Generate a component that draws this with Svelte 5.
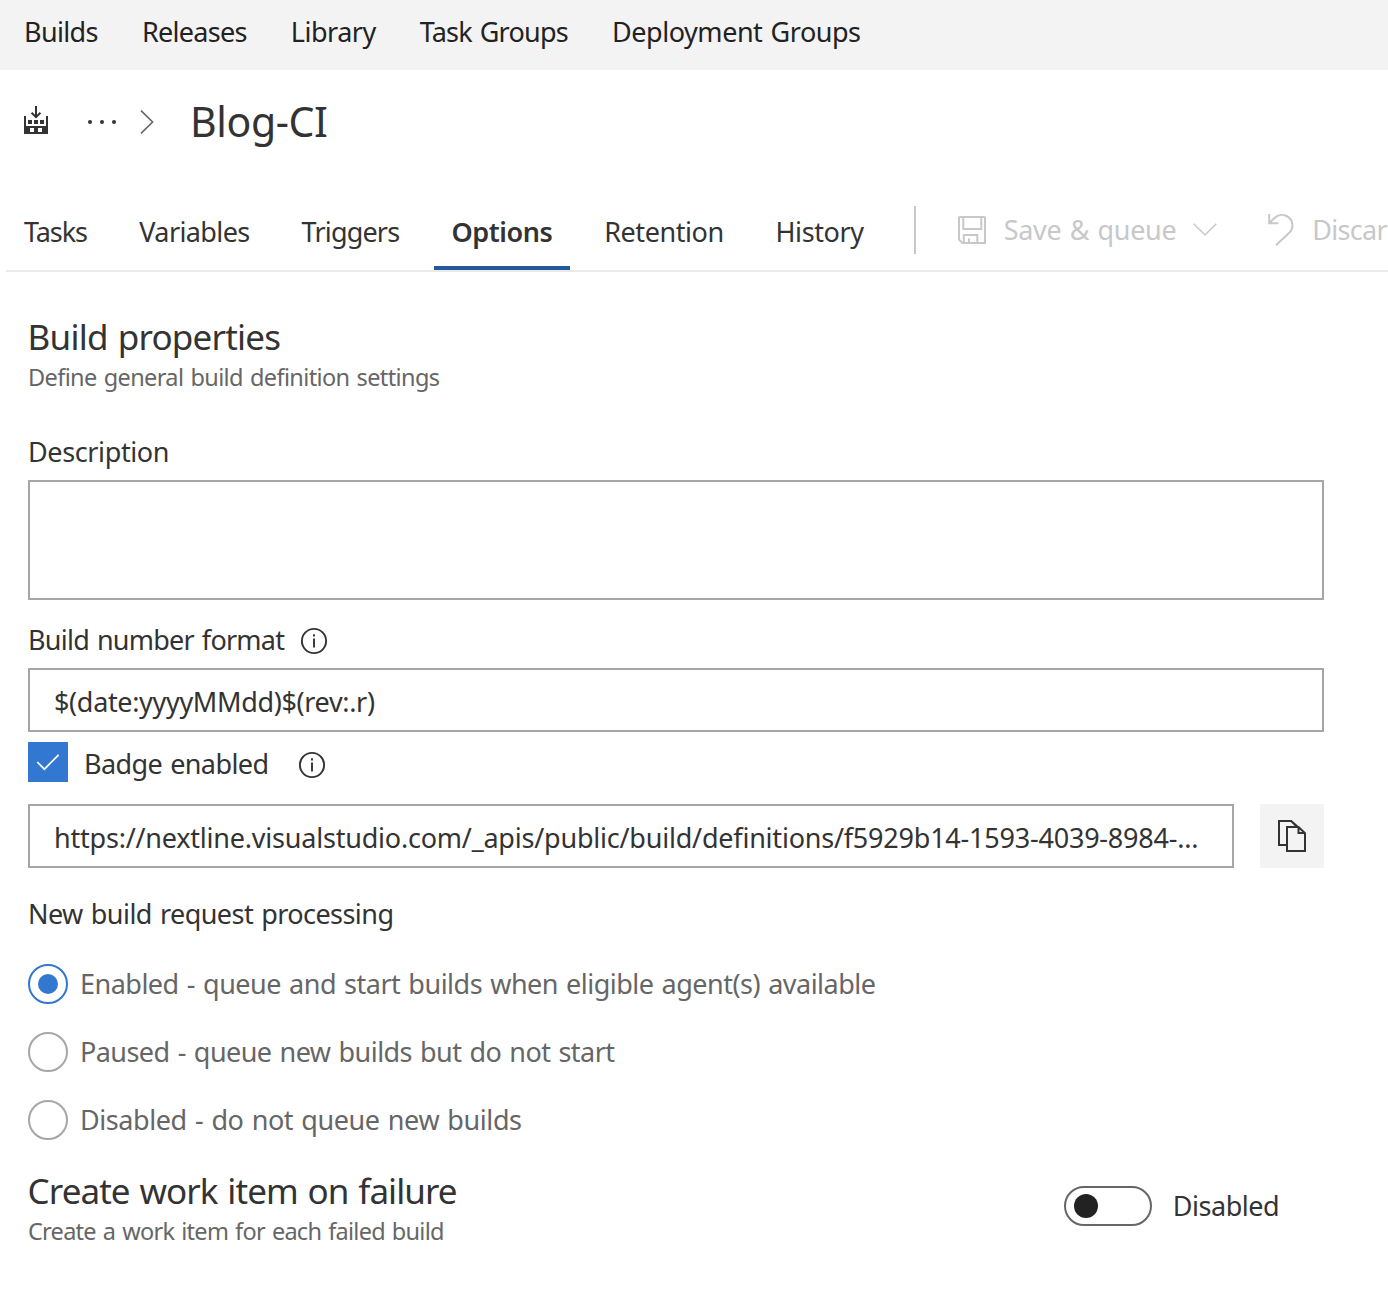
<script>
  const sections = [
    { label: 'Builds', width: 74.5 },
    { label: 'Releases', width: 105.5 },
    { label: 'Library', width: 85.5 },
    { label: 'Task Groups', width: 149 },
    { label: 'Deployment Groups', width: 249 }
  ];

  const tabs = [
    { label: 'Tasks', width: 64 },
    { label: 'Variables', width: 111 },
    { label: 'Triggers', width: 98.5 },
    { label: 'Options', width: 101.5 },
    { label: 'Retention', width: 120 },
    { label: 'History', width: 88.5 }
  ];

  const modes = [
    { id: 'enabled', label: 'Enabled - queue and start builds when eligible agent(s) available', width: 796 },
    { id: 'paused', label: 'Paused - queue new builds but do not start', width: 535 },
    { id: 'disabled', label: 'Disabled - do not queue new builds', width: 442 }
  ];

  let activeTab = $state('Options');
  let mode = $state('enabled');
  let badge = $state(true);
  let workItem = $state(false);

  // Tracks a label so that it takes exactly the given width.
  function fit(node, width) {
    const natural = node.getBoundingClientRect().width;
    const count = node.textContent.length;
    node.style.letterSpacing = `${(width - natural) / (count - 1)}px`;
    node.style.width = `${width}px`;
  }
</script>

{#snippet info()}
  <svg class="info" viewBox="0 0 26 26" aria-hidden="true">
    <circle cx="13" cy="13" r="12.1" />
    <path d="M13 10.5V19.5M13 6.3V8.6" />
  </svg>
{/snippet}

<div class="page">
  <nav class="sections">
    {#each sections as s}
      <span class="text" use:fit={s.width}>{s.label}</span>
    {/each}
  </nav>

  <header class="crumb">
    <svg class="factory" viewBox="0 0 24 28" aria-hidden="true">
      <path class="solid" fill-rule="evenodd" d="M0 10H2V20H22V10H24V28H0ZM6 22V26H10V22ZM14 22V26H18V22Z" />
      <path class="solid" d="M4 14H8V18H4ZM10 14H14V18H10ZM16 14H20V18H16Z" />
      <path class="arrow" d="M12 0V11M7.6 6.8L12 11.2L16.4 6.8" />
    </svg>
    <svg class="dots" viewBox="0 0 28 4" aria-hidden="true">
      <circle cx="2" cy="2" r="2" /><circle cx="14" cy="2" r="2" /><circle cx="26" cy="2" r="2" />
    </svg>
    <svg class="next" viewBox="0 0 14 24" aria-hidden="true"><path d="M1 0.6L12.6 12L1 23.4" /></svg>
    <h1 class="text" use:fit={138}>Blog-CI</h1>
  </header>

  <div class="toolbar">
    <div class="tabs">
      {#each tabs as t}
        <button class="tab" class:active={t.label === activeTab} onclick={() => (activeTab = t.label)}>
          <span class="text" use:fit={t.width}>{t.label}</span>
        </button>
      {/each}
    </div>
    <div class="divider"></div>
    <div class="actions">
      <svg class="save" viewBox="0 0 28 28" aria-hidden="true">
        <path d="M2 1H26Q27 1 27 2V27H4.5L1 23.5V2Q1 1 2 1ZM5.3 1V13H23.3V1M5.8 27V19H19.3V27M11 27V22.5" />
      </svg>
      <span class="text" use:fit={173}>Save &amp; queue</span>
      <svg class="down" viewBox="0 0 24 13" aria-hidden="true"><path d="M0.7 0.8L12 12L23.3 0.8" /></svg>
      <svg class="undo" viewBox="0 0 26 32" aria-hidden="true">
        <path d="M1.2 0V9.2H10.5M1.2 9.2L6.5 4C9.5 1 14.5 0.2 18.5 2C25 5 26.4 13.5 21.5 18.5L8 31.3" />
      </svg>
      <span class="text" use:fit={75.5}>Discar</span>
    </div>
  </div>

  <main>
    <h2 class="text" use:fit={253.5}>Build properties</h2>
    <p class="sub text" use:fit={412}>Define general build definition settings</p>

    <div class="label first"><span class="text" use:fit={141.5}>Description</span></div>
    <div class="box area"></div>

    <div class="label second"><span class="text" use:fit={257}>Build number format</span>{@render info()}</div>
    <div class="box field"><span class="text" use:fit={321}>$(date:yyyyMMdd)$(rev:.r)</span></div>

    <div class="badge">
      <button class="check" class:on={badge} aria-label="Badge enabled" onclick={() => (badge = !badge)}>
        <svg viewBox="0 0 24 18" aria-hidden="true"><path d="M1.2 9L8.4 16.2L22.6 1.8" /></svg>
      </button>
      <span class="badge-text"><span class="text" use:fit={185}>Badge enabled</span>{@render info()}</span>
    </div>

    <div class="url">
      <div class="box field">
        <span class="text" use:fit={1144.5}>https://nextline.visualstudio.com/_apis/public/build/definitions/f5929b14-1593-4039-8984-...</span>
      </div>
      <button class="copy" aria-label="Copy">
        <svg viewBox="0 0 28 32" aria-hidden="true">
          <path d="M8 25H1V1H13.2L19 6.8M9 7H20.5L27 13.2V31H9ZM20.5 7V13H27M13.2 1L20.5 7.5" />
        </svg>
      </button>
    </div>

    <div class="label third"><span class="text" use:fit={366}>New build request processing</span></div>
    <div class="modes">
      {#each modes as m}
        <button class="mode" class:on={mode === m.id} onclick={() => (mode = m.id)}>
          <span class="ring"></span>
          <span class="text" use:fit={m.width}>{m.label}</span>
        </button>
      {/each}
    </div>

    <div class="failure">
      <div>
        <h2 class="text" use:fit={430}>Create work item on failure</h2>
        <p class="sub text" use:fit={416.5}>Create a work item for each failed build</p>
      </div>
      <div class="switch">
        <button class="toggle" class:on={workItem} aria-label="Create work item" onclick={() => (workItem = !workItem)}>
          <span class="knob"></span>
        </button>
        <span class="text" use:fit={107}>Disabled</span>
      </div>
    </div>
  </main>
</div>

<style>
  :global(body) {
    background: #fff;
  }
  .page {
    height: 1314px;
    overflow: hidden;
    font-family: 'Noto Sans', 'Open Sans', sans-serif;
    font-size: 27px;
    line-height: 31px;
    word-spacing: 1.6px;
    color: #333;
  }
  .text {
    display: block;
    width: max-content;
    flex: none;
    white-space: nowrap;
  }
  h1, h2, p {
    margin: 0;
    font-weight: 400;
  }
  button {
    margin: 0;
    padding: 0;
    border: 0;
    background: none;
    font: inherit;
    word-spacing: inherit;
    color: inherit;
    text-align: left;
  }
  svg {
    display: block;
    flex: none;
    fill: none;
    stroke: currentColor;
    stroke-width: 2;
    overflow: visible;
  }
  .sections {
    box-sizing: border-box;
    height: 70px;
    padding: 16px 24px 0;
    display: flex;
    gap: 43.4px;
    background: #f3f3f3;
    color: #222;
  }
  .crumb {
    height: 100px;
    padding-left: 24px;
    display: flex;
    align-items: center;
  }
  .factory {
    width: 24px;
    height: 28px;
  }
  .solid {
    fill: #333;
    stroke: none;
  }
  .dots {
    width: 28px;
    height: 4px;
    margin: 4px 0 0 40px;
    fill: #333;
    stroke: none;
  }
  .next {
    width: 14px;
    height: 24px;
    margin: 4px 0 0 23.5px;
    stroke: #666;
    stroke-width: 1.6;
  }
  h1 {
    margin-left: 36.5px;
    padding-top: 2px;
    font-size: 41px;
    line-height: 60px;
  }
  .toolbar {
    height: 100px;
    margin-left: 6px;
    padding-left: 0.75px;
    display: flex;
    border-bottom: 2px solid #eaeaea;
  }
  .tabs {
    flex: none;
    display: flex;
    gap: 16.8px;
  }
  .tab {
    box-sizing: border-box;
    height: 100px;
    padding: 27px 17.25px 0;
    border-bottom: 4px solid transparent;
  }
  .tab.active {
    border-color: #22599b;
    font-weight: 600;
  }
  .divider {
    flex: none;
    width: 2px;
    height: 48px;
    margin: 36px 0 0 32.5px;
    background: #c8c8c8;
  }
  .actions {
    flex: none;
    height: 119px;
    display: flex;
    align-items: center;
    color: #c8c8c8;
  }
  .save {
    width: 28px;
    height: 28px;
    margin: 0 18px 0 42px;
  }
  .down {
    width: 24px;
    height: 13px;
    margin: 0 51px 0 16px;
    stroke-width: 1.5;
  }
  .undo {
    width: 26px;
    height: 32px;
    margin-right: 18.5px;
  }
  main {
    width: 1296px;
    padding: 44px 0 0 28px;
  }
  h2 {
    margin-left: -0.4px;
    font-size: 35px;
    line-height: 41px;
  }
  .sub {
    margin-top: 5px;
    font-size: 23.5px;
    line-height: 30px;
    color: #666;
  }
  .label {
    display: flex;
  }
  .first { margin-top: 44px; }
  .second { margin-top: 24px; }
  .third { margin-top: 30px; }
  .info {
    width: 26px;
    height: 26px;
    margin: 4px 0 0 16px;
    stroke-width: 1.9;
  }
  .box {
    box-sizing: border-box;
    border: 2px solid #a6a6a6;
    background: #fff;
  }
  .area {
    height: 120px;
    margin-top: 13px;
  }
  .field {
    height: 64px;
    padding: 16px 0 0 24px;
  }
  .label + .field {
    margin-top: 13px;
  }
  .badge {
    height: 40px;
    margin-top: 10px;
    display: flex;
    align-items: center;
  }
  .check {
    width: 40px;
    height: 40px;
    display: grid;
    place-items: center;
    border: 2px solid #a6a6a6;
    box-sizing: border-box;
    color: #fff;
  }
  .check.on {
    border-color: #3278d1;
    background: #3278d1;
  }
  .check svg {
    width: 24px;
    height: 18px;
    stroke-width: 1.7;
  }
  .badge-text {
    display: flex;
    padding: 3px 0 0 16px;
  }
  .badge-text .info {
    margin-left: 29.5px;
  }
  .url {
    margin-top: 22px;
    display: flex;
    justify-content: space-between;
  }
  .url .field {
    width: 1206px;
  }
  .copy {
    width: 64px;
    height: 64px;
    display: grid;
    place-items: center;
    background: #f3f3f3;
  }
  .copy svg {
    width: 28px;
    height: 32px;
  }
  .modes {
    margin-top: 35px;
    display: grid;
    gap: 28px;
  }
  .mode {
    display: flex;
    align-items: center;
    gap: 12px;
    color: #666;
  }
  .mode .text,
  .switch .text {
    padding-bottom: 2px;
  }
  .ring {
    box-sizing: border-box;
    width: 40px;
    height: 40px;
    display: grid;
    place-items: center;
    border: 2px solid #a6a6a6;
    border-radius: 50%;
  }
  .on .ring {
    border-color: #3278d1;
  }
  .on .ring::after {
    content: '';
    width: 20px;
    height: 20px;
    border-radius: 50%;
    background: #3278d1;
  }
  .failure {
    margin-top: 30px;
    display: flex;
    justify-content: space-between;
  }
  .switch {
    height: 72px;
    padding-right: 44.3px;
    display: flex;
    align-items: center;
    gap: 20.7px;
  }
  .toggle {
    box-sizing: border-box;
    width: 88px;
    height: 40px;
    padding: 0 8px;
    display: flex;
    align-items: center;
    border: 2px solid #666;
    border-radius: 20px;
  }
  .toggle.on {
    justify-content: flex-end;
  }
  .knob {
    width: 24px;
    height: 24px;
    border-radius: 50%;
    background: #222;
  }
</style>
